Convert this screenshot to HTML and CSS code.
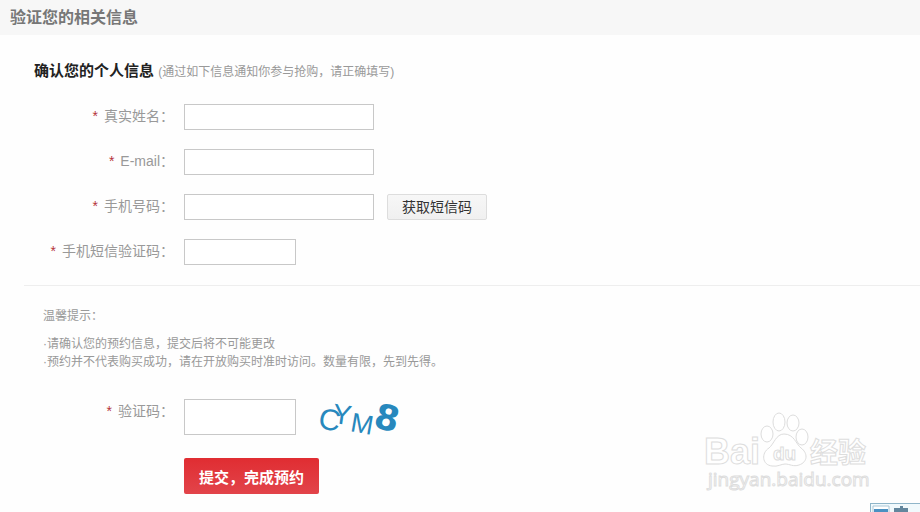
FILE: index.html
```
<!DOCTYPE html>
<html lang="zh-CN">
<head>
  <meta charset="UTF-8" />
  <meta name="viewport" content="width=device-width, initial-scale=1.0"/>
  <title>验证您的相关信息</title>
  <link rel="stylesheet" href="styles.css">
</head>
<body>
  <header class="topbar">
    <h1>验证您的相关信息</h1>
  </header>

  <form class="verify-form">
    <section class="info">
      <h2>确认您的个人信息 <small>(通过如下信息通知你参与抢购，请正确填写)</small></h2>

      <div class="row">
        <label for="realname"><span class="required">*</span>真实姓名：</label>
        <input type="text" id="realname" />
      </div>
      <div class="row">
        <label for="email"><span class="required">*</span>E-mail：</label>
        <input type="text" id="email" />
      </div>
      <div class="row">
        <label for="mobile"><span class="required">*</span>手机号码：</label>
        <input type="text" id="mobile" />
        <button type="button" class="btn-sms">获取短信码</button>
      </div>
      <div class="row">
        <label for="sms_code"><span class="required">*</span>手机短信验证码：</label>
        <input type="text" id="sms_code" class="short" />
      </div>
    </section>

    <section class="confirm">
      <div class="tips">
        <h3>温馨提示：</h3>
        <p>·请确认您的预约信息，提交后将不可能更改</p>
        <p>·预约并不代表购买成功，请在开放购买时准时访问。数量有限，先到先得。</p>
      </div>

      <div class="row">
        <label for="captcha"><span class="required">*</span>验证码：</label>
        <input type="text" id="captcha" class="short tall" />
        <svg class="captcha" width="90" height="36" viewBox="0 0 90 36">
          <text x="3" y="31" font-size="30" transform="rotate(10 14 20)">C</text>
          <text x="17" y="25" font-size="28" transform="rotate(8 26 14)">Y</text>
          <text x="35" y="34" font-size="27" transform="rotate(10 46 24)">M</text>
          <text x="59" y="31" font-size="35" class="heavy" transform="rotate(14 71 18)">8</text>
        </svg>
      </div>

      <button type="submit" class="btn-submit">提交，完成预约</button>
    </section>
  </form>

  <svg class="watermark" width="170" height="84" viewBox="0 0 170 84">
    <text x="2" y="54" font-size="36" class="latin">Bai</text>
    <ellipse cx="65" cy="24" rx="6" ry="8"/>
    <ellipse cx="77" cy="12" rx="6" ry="9"/>
    <ellipse cx="91" cy="13" rx="6" ry="8"/>
    <ellipse cx="100" cy="27" rx="6" ry="8"/>
    <path d="M82 24C74 24 72 34 67 38C59 43 60 55 70 56C76 57 79 54 83 54C88 54 91 57 97 55C106 52 106 43 99 38C94 34 92 24 82 24Z"/>
    <text x="71" y="50" font-size="19" class="latin">du</text>
    <text x="108" y="53" font-size="28" class="cjk">经验</text>
    <text x="6" y="76" font-size="19" class="url">jingyan.baidu.com</text>
  </svg>

  <svg class="ime" width="50" height="9" viewBox="0 0 50 9">
    <path d="M0 0H50V9H0Z" fill="#f1f9fc"/>
    <path d="M0 9V0H50" fill="none" stroke="#8fb5c9" stroke-width="2"/>
    <path d="M3 9V3H19V9" fill="#fff" stroke="#a9c6d6"/>
    <path d="M4 6H18V9H4Z" fill="#4a91c2"/>
    <path d="M24 5H30V3H33V5H38V9H24Z" fill="#63869d"/>
  </svg>
</body>
</html>
```
FILE: styles.css
```
body {
  position: relative;
  margin: 0;
  min-height: 100vh;
  font-family: "Liberation Sans", "Noto Sans CJK SC", sans-serif;
  font-size: 14px;
  color: #999;
  background: #fefefe;
}
h1, h2, h3, p {
  margin: 0;
}
.topbar {
  background: #f7f7f7;
  padding: 0 10px;
}
.topbar h1 {
  font-size: 16px;
  line-height: 35px;
  color: #777;
}
.verify-form {
  padding-left: 24px;
}
.info {
  padding: 24px 0 20px 10px;
  border-bottom: 1px solid #eee;
}
.info h2 {
  font-size: 15px;
  line-height: 24px;
  margin-bottom: 20px;
  color: #222;
}
.info small {
  font-size: 12px;
  font-weight: normal;
  color: #999;
}
.row {
  display: flex;
  align-items: flex-start;
  margin-bottom: 19px;
}
.info .row:last-child {
  margin-bottom: 0;
}
label {
  width: 140px;
  margin-right: 10px;
  line-height: 24px;
  text-align: right;
}
.required {
  margin-right: 6px;
  color: #b5333a;
}
input {
  box-sizing: border-box;
  width: 190px;
  height: 26px;
  padding: 2px 6px;
  border: 1px solid #c8c8c8;
  background: #fff;
  font: inherit;
}
.short {
  width: 112px;
}
.tall {
  height: 36px;
}
button {
  font: inherit;
  cursor: pointer;
}
.btn-sms {
  height: 26px;
  margin-left: 13px;
  padding: 0 14px;
  border: 1px solid #ddd;
  border-radius: 2px;
  background: linear-gradient(#f7f7f7, #f0f0f0);
  color: #333;
  line-height: 24px;
}
.confirm {
  padding: 21px 0 18px 10px;
}
.tips {
  margin: 0 0 28px 9px;
  font-size: 12px;
  line-height: 18px;
}
.tips h3 {
  margin-bottom: 10px;
  font-size: 12px;
  font-weight: normal;
}
.confirm .row {
  margin-bottom: 23px;
}
.captcha {
  margin-left: 20px;
  overflow: visible;
  fill: #2788bd;
}
.captcha .heavy {
  font-family: "DejaVu Sans", sans-serif;
  font-weight: bold;
}
.btn-submit {
  display: block;
  height: 36px;
  margin-left: 150px;
  padding: 0 15px;
  border: 0;
  border-radius: 2px;
  background: linear-gradient(#e02d32, #e2444a);
  color: #fff;
  font-size: 15px;
  font-weight: bold;
}
.watermark {
  position: absolute;
  right: 48px;
  bottom: 18px;
  fill: #fff;
  stroke: #ddd;
}
.watermark .latin {
  font-family: "Liberation Sans", sans-serif;
  font-weight: bold;
}
.watermark .cjk {
  font-family: "Noto Sans CJK SC", sans-serif;
  font-weight: bold;
}
.watermark .url {
  font-family: "Open Sans", sans-serif;
}
.ime {
  position: absolute;
  right: 0;
  bottom: 0;
}
```
